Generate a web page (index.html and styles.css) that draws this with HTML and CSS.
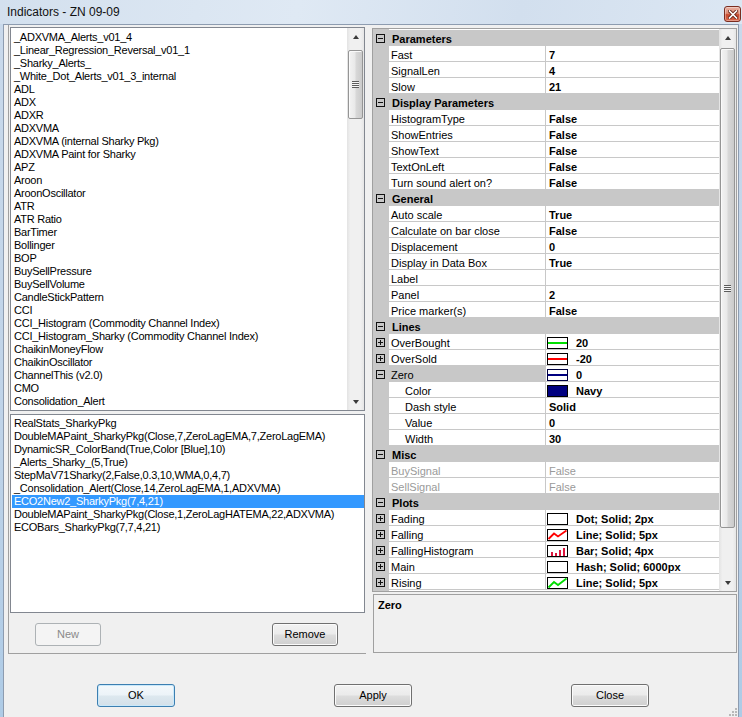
FILE: index.html
```html
<!DOCTYPE html>
<html>
<head>
<meta charset="utf-8">
<title>Indicators - ZN 09-09</title>
<link rel="stylesheet" href="styles.css">
</head>
<body>
<div class="window">
  <div class="titlebar">
    <span class="title">Indicators - ZN 09-09</span>
    <span class="close-btn"><svg width="10" height="9" viewBox="0 0 10 9"><path d="M1.5 1 L8.5 8 M8.5 1 L1.5 8" stroke="#6a2418" stroke-width="3.4" stroke-linecap="square"/><path d="M1.5 1 L8.5 8 M8.5 1 L1.5 8" stroke="#ffffff" stroke-width="1.6" stroke-linecap="square"/></svg></span>
  </div>
  <div class="client">
    <div class="main">
      <div class="left-pane">
        <div class="listbox top-list">
          <div class="items">
            <div class="item">_ADXVMA_Alerts_v01_4</div>
            <div class="item">_Linear_Regression_Reversal_v01_1</div>
            <div class="item">_Sharky_Alerts_</div>
            <div class="item">_White_Dot_Alerts_v01_3_internal</div>
            <div class="item">ADL</div>
            <div class="item">ADX</div>
            <div class="item">ADXR</div>
            <div class="item">ADXVMA</div>
            <div class="item">ADXVMA (internal Sharky Pkg)</div>
            <div class="item">ADXVMA Paint for Sharky</div>
            <div class="item">APZ</div>
            <div class="item">Aroon</div>
            <div class="item">AroonOscillator</div>
            <div class="item">ATR</div>
            <div class="item">ATR Ratio</div>
            <div class="item">BarTimer</div>
            <div class="item">Bollinger</div>
            <div class="item">BOP</div>
            <div class="item">BuySellPressure</div>
            <div class="item">BuySellVolume</div>
            <div class="item">CandleStickPattern</div>
            <div class="item">CCI</div>
            <div class="item">CCI_Histogram (Commodity Channel Index)</div>
            <div class="item">CCI_Histogram_Sharky (Commodity Channel Index)</div>
            <div class="item">ChaikinMoneyFlow</div>
            <div class="item">ChaikinOscillator</div>
            <div class="item">ChannelThis (v2.0)</div>
            <div class="item">CMO</div>
            <div class="item">Consolidation_Alert</div>
          </div>
          <div class="vscroll list-scroll">
            <div class="sb-btn"><span class="arr-up"></span></div>
            <div class="thumb list-thumb"><span class="grip"></span></div>
            <div class="sb-fill"></div>
            <div class="sb-btn"><span class="arr-down"></span></div>
          </div>
        </div>
        <div class="listbox bottom-list">
          <div class="items">
            <div class="item">RealStats_SharkyPkg</div>
            <div class="item">DoubleMAPaint_SharkyPkg(Close,7,ZeroLagEMA,7,ZeroLagEMA)</div>
            <div class="item">DynamicSR_ColorBand(True,Color [Blue],10)</div>
            <div class="item">_Alerts_Sharky_(5,True)</div>
            <div class="item">StepMaV71Sharky(2,False,0.3,10,WMA,0,4,7)</div>
            <div class="item">_Consolidation_Alert(Close,14,ZeroLagEMA,1,ADXVMA)</div>
            <div class="item selected">ECO2New2_SharkyPkg(7,4,21)</div>
            <div class="item">DoubleMAPaint_SharkyPkg(Close,1,ZeroLagHATEMA,22,ADXVMA)</div>
            <div class="item">ECOBars_SharkyPkg(7,7,4,21)</div>
          </div>
        </div>
        <div class="left-buttons">
          <button class="btn btn-new" disabled>New</button>
          <button class="btn btn-remove">Remove</button>
        </div>
      </div>

      <div class="right-pane">
        <div class="propgrid">
          <div class="pg-rows">
            <div class="pg-cat"><span class="pg-margin"><svg class="exp" width="9" height="9"><rect x=".5" y=".5" width="8" height="8" fill="none" stroke="#111"/><path d="M2 4.5h5" stroke="#111"/></svg></span><span class="cat-label">Parameters</span></div>
            <div class="pg-row"><span class="pg-margin"></span><span class="pg-name">Fast</span><span class="pg-val">7</span></div>
            <div class="pg-row"><span class="pg-margin"></span><span class="pg-name">SignalLen</span><span class="pg-val">4</span></div>
            <div class="pg-row"><span class="pg-margin"></span><span class="pg-name">Slow</span><span class="pg-val">21</span></div>

            <div class="pg-cat"><span class="pg-margin"><svg class="exp" width="9" height="9"><rect x=".5" y=".5" width="8" height="8" fill="none" stroke="#111"/><path d="M2 4.5h5" stroke="#111"/></svg></span><span class="cat-label">Display Parameters</span></div>
            <div class="pg-row"><span class="pg-margin"></span><span class="pg-name">HistogramType</span><span class="pg-val">False</span></div>
            <div class="pg-row"><span class="pg-margin"></span><span class="pg-name">ShowEntries</span><span class="pg-val">False</span></div>
            <div class="pg-row"><span class="pg-margin"></span><span class="pg-name">ShowText</span><span class="pg-val">False</span></div>
            <div class="pg-row"><span class="pg-margin"></span><span class="pg-name">TextOnLeft</span><span class="pg-val">False</span></div>
            <div class="pg-row"><span class="pg-margin"></span><span class="pg-name">Turn sound alert on?</span><span class="pg-val">False</span></div>

            <div class="pg-cat"><span class="pg-margin"><svg class="exp" width="9" height="9"><rect x=".5" y=".5" width="8" height="8" fill="none" stroke="#111"/><path d="M2 4.5h5" stroke="#111"/></svg></span><span class="cat-label">General</span></div>
            <div class="pg-row"><span class="pg-margin"></span><span class="pg-name">Auto scale</span><span class="pg-val">True</span></div>
            <div class="pg-row"><span class="pg-margin"></span><span class="pg-name">Calculate on bar close</span><span class="pg-val">False</span></div>
            <div class="pg-row"><span class="pg-margin"></span><span class="pg-name">Displacement</span><span class="pg-val">0</span></div>
            <div class="pg-row"><span class="pg-margin"></span><span class="pg-name">Display in Data Box</span><span class="pg-val">True</span></div>
            <div class="pg-row"><span class="pg-margin"></span><span class="pg-name">Label</span><span class="pg-val"></span></div>
            <div class="pg-row"><span class="pg-margin"></span><span class="pg-name">Panel</span><span class="pg-val">2</span></div>
            <div class="pg-row"><span class="pg-margin"></span><span class="pg-name">Price marker(s)</span><span class="pg-val">False</span></div>

            <div class="pg-cat"><span class="pg-margin"><svg class="exp" width="9" height="9"><rect x=".5" y=".5" width="8" height="8" fill="none" stroke="#111"/><path d="M2 4.5h5" stroke="#111"/></svg></span><span class="cat-label">Lines</span></div>
            <div class="pg-row"><span class="pg-margin"><svg class="exp" width="9" height="9"><rect x=".5" y=".5" width="8" height="8" fill="none" stroke="#111"/><path d="M2 4.5h5M4.5 2v5" stroke="#111"/></svg></span><span class="pg-name">OverBought</span><span class="pg-val sw"><svg width="21" height="12"><rect x=".5" y=".5" width="20" height="11" fill="#fff" stroke="#000"/><rect x="1" y="5" width="19" height="2" fill="#00e000"/></svg><span class="sw-text">20</span></span></div>
            <div class="pg-row"><span class="pg-margin"><svg class="exp" width="9" height="9"><rect x=".5" y=".5" width="8" height="8" fill="none" stroke="#111"/><path d="M2 4.5h5M4.5 2v5" stroke="#111"/></svg></span><span class="pg-name">OverSold</span><span class="pg-val sw"><svg width="21" height="12"><rect x=".5" y=".5" width="20" height="11" fill="#fff" stroke="#000"/><rect x="1" y="5" width="19" height="2" fill="#ff0000"/></svg><span class="sw-text">-20</span></span></div>
            <div class="pg-row"><span class="pg-margin"><svg class="exp" width="9" height="9"><rect x=".5" y=".5" width="8" height="8" fill="none" stroke="#111"/><path d="M2 4.5h5" stroke="#111"/></svg></span><span class="pg-name selected-name">Zero</span><span class="pg-val sw"><svg width="21" height="12"><rect x=".5" y=".5" width="20" height="11" fill="#fff" stroke="#000040"/><rect x="1" y="5" width="19" height="2" fill="#000080"/></svg><span class="sw-text">0</span></span></div>
            <div class="pg-row"><span class="pg-margin"></span><span class="pg-name child">Color</span><span class="pg-val sw"><svg width="21" height="12"><rect x=".5" y=".5" width="20" height="11" fill="#000080" stroke="#000"/></svg><span class="sw-text">Navy</span></span></div>
            <div class="pg-row"><span class="pg-margin"></span><span class="pg-name child">Dash style</span><span class="pg-val">Solid</span></div>
            <div class="pg-row"><span class="pg-margin"></span><span class="pg-name child">Value</span><span class="pg-val">0</span></div>
            <div class="pg-row"><span class="pg-margin"></span><span class="pg-name child">Width</span><span class="pg-val">30</span></div>

            <div class="pg-cat"><span class="pg-margin"><svg class="exp" width="9" height="9"><rect x=".5" y=".5" width="8" height="8" fill="none" stroke="#111"/><path d="M2 4.5h5" stroke="#111"/></svg></span><span class="cat-label">Misc</span></div>
            <div class="pg-row disabled"><span class="pg-margin"></span><span class="pg-name">BuySignal</span><span class="pg-val">False</span></div>
            <div class="pg-row disabled"><span class="pg-margin"></span><span class="pg-name">SellSignal</span><span class="pg-val">False</span></div>

            <div class="pg-cat"><span class="pg-margin"><svg class="exp" width="9" height="9"><rect x=".5" y=".5" width="8" height="8" fill="none" stroke="#111"/><path d="M2 4.5h5" stroke="#111"/></svg></span><span class="cat-label">Plots</span></div>
            <div class="pg-row"><span class="pg-margin"><svg class="exp" width="9" height="9"><rect x=".5" y=".5" width="8" height="8" fill="none" stroke="#111"/><path d="M2 4.5h5M4.5 2v5" stroke="#111"/></svg></span><span class="pg-name">Fading</span><span class="pg-val sw"><svg width="21" height="12"><rect x=".5" y=".5" width="20" height="11" fill="#fff" stroke="#000"/></svg><span class="sw-text">Dot; Solid; 2px</span></span></div>
            <div class="pg-row"><span class="pg-margin"><svg class="exp" width="9" height="9"><rect x=".5" y=".5" width="8" height="8" fill="none" stroke="#111"/><path d="M2 4.5h5M4.5 2v5" stroke="#111"/></svg></span><span class="pg-name">Falling</span><span class="pg-val sw"><svg width="21" height="12"><rect x=".5" y=".5" width="20" height="11" fill="#fff" stroke="#000"/><polyline points="1.5,10 7,4.5 11,7.5 19.5,1.5" fill="none" stroke="#ff0000" stroke-width="1.8"/></svg><span class="sw-text">Line; Solid; 5px</span></span></div>
            <div class="pg-row"><span class="pg-margin"><svg class="exp" width="9" height="9"><rect x=".5" y=".5" width="8" height="8" fill="none" stroke="#111"/><path d="M2 4.5h5M4.5 2v5" stroke="#111"/></svg></span><span class="pg-name">FallingHistogram</span><span class="pg-val sw"><svg width="21" height="12"><rect x=".5" y=".5" width="20" height="11" fill="#fff" stroke="#000"/><rect x="4" y="7" width="2" height="4" fill="#dc143c"/><rect x="8" y="8" width="2" height="3" fill="#dc143c"/><rect x="12" y="5" width="2" height="6" fill="#dc143c"/><rect x="16" y="3" width="2" height="8" fill="#dc143c"/></svg><span class="sw-text">Bar; Solid; 4px</span></span></div>
            <div class="pg-row"><span class="pg-margin"><svg class="exp" width="9" height="9"><rect x=".5" y=".5" width="8" height="8" fill="none" stroke="#111"/><path d="M2 4.5h5M4.5 2v5" stroke="#111"/></svg></span><span class="pg-name">Main</span><span class="pg-val sw"><svg width="21" height="12"><rect x=".5" y=".5" width="20" height="11" fill="#fff" stroke="#000"/></svg><span class="sw-text">Hash; Solid; 6000px</span></span></div>
            <div class="pg-row"><span class="pg-margin"><svg class="exp" width="9" height="9"><rect x=".5" y=".5" width="8" height="8" fill="none" stroke="#111"/><path d="M2 4.5h5M4.5 2v5" stroke="#111"/></svg></span><span class="pg-name">Rising</span><span class="pg-val sw"><svg width="21" height="12"><rect x=".5" y=".5" width="20" height="11" fill="#fff" stroke="#000"/><polyline points="1.5,10.5 7,5 11,8 19.5,1.5" fill="none" stroke="#00dd00" stroke-width="1.8"/></svg><span class="sw-text">Line; Solid; 5px</span></span></div>
          </div>
          <div class="vscroll grid-scroll">
            <div class="sb-btn"><span class="arr-up"></span></div>
            <div class="thumb grid-thumb"><span class="grip"></span></div>
            <div class="sb-fill"></div>
            <div class="sb-btn"><span class="arr-down"></span></div>
          </div>
        </div>
        <div class="desc">Zero</div>
      </div>
    </div>

    <div class="dlg-buttons">
      <button class="btn btn-dlg btn-default">OK</button>
      <button class="btn btn-dlg">Apply</button>
      <button class="btn btn-dlg">Close</button>
    </div>
    <svg class="grip-corner" width="10" height="10" viewBox="0 0 10 10"><g fill="#b8b8b8"><rect x="7" y="1" width="2" height="2"/><rect x="4" y="4" width="2" height="2"/><rect x="7" y="4" width="2" height="2"/><rect x="1" y="7" width="2" height="2"/><rect x="4" y="7" width="2" height="2"/><rect x="7" y="7" width="2" height="2"/></g></svg>
  </div>
</div>
</body>
</html>
```

FILE: styles.css
```css
* { box-sizing: border-box; }
html, body { margin: 0; padding: 0; }
body {
  width: 742px;
  height: 717px;
  overflow: hidden;
  font-family: "Liberation Sans", Arial, sans-serif;
  font-size: 11px;
  color: #000;
}

.window {
  width: 742px;
  height: 717px;
  display: flex;
  flex-direction: column;
  padding: 0 3px;
  background: linear-gradient(to bottom, #dbe6f3 0px, #c9d9eb 24px, #bfd3e8 60%, #aecbe6 100%);
}

.titlebar {
  height: 24px;
  flex: none;
  display: flex;
  align-items: flex-start;
  justify-content: space-between;
  background: linear-gradient(100deg, #d3e0ee 0%, #dfe9f4 40%, #d2dfee 70%, #dce7f3 100%);
  margin: 0 -3px;
  padding-right: 1px;
  padding-left: 7px;
}
.title {
  font-size: 12px;
  line-height: 24px;
  color: #111;
}
.close-btn {
  margin-top: 6px;
  width: 17px;
  height: 16px;
  border: 1px solid #7a2d20;
  border-radius: 3px;
  background: linear-gradient(to bottom, #eab2a4 0%, #dd8b74 45%, #c8482d 55%, #d9664a 100%);
  display: flex;
  align-items: center;
  justify-content: center;
  box-shadow: inset 0 0 0 1px rgba(255,255,255,0.35);
}

.client {
  flex: 1;
  position: relative;
  background: #f0f0f0;
  border: 1px solid #8d9cb0;
  border-bottom: none;
  display: flex;
  flex-direction: column;
}

.main {
  display: flex;
  flex: none;
}

/* left side */
.left-pane {
  margin-left: 4px;
  width: 358px;
  height: 629px;
  border-left: 1px solid #a0a0a0;
  border-bottom: 1px solid #a0a0a0;
  padding: 2px 0 0 1px;
  display: flex;
  flex-direction: column;
}

.listbox {
  width: 355px;
  border: 1px solid #828790;
  background: #fff;
  display: flex;
  flex: none;
}
.top-list { height: 384px; }
.bottom-list { height: 199px; margin-top: 3px; }

.items {
  flex: 1;
  padding: 3px 0 0 1px;
  overflow: hidden;
}
.bottom-list .items { padding-top: 2px; }
.item {
  height: 13px;
  line-height: 13px;
  padding-left: 2px;
  white-space: nowrap;
  letter-spacing: -0.25px;
}
.item.selected {
  background: #3399ff;
  color: #fff;
}

.left-buttons {
  display: flex;
  margin-top: 10px;
  padding-left: 25px;
}
.btn-new { margin-right: 171px; }

/* scrollbars */
.vscroll {
  width: 17px;
  flex: none;
  display: flex;
  flex-direction: column;
  align-items: center;
  background: linear-gradient(to right, #e3e3e3 0%, #f0f0f0 20%, #f0f0f0 80%, #e6e6e6 100%);
}
.sb-btn {
  height: 17px;
  width: 17px;
  flex: none;
  display: flex;
  align-items: center;
  justify-content: center;
}
.arr-up {
  width: 0; height: 0;
  border-left: 3.5px solid transparent;
  border-right: 3.5px solid transparent;
  border-bottom: 4px solid #3a3a3a;
}
.arr-down {
  width: 0; height: 0;
  border-left: 3.5px solid transparent;
  border-right: 3.5px solid transparent;
  border-top: 4px solid #3a3a3a;
}
.sb-fill { flex: 1; }
.thumb {
  width: 15px;
  flex: none;
  border: 1px solid #959595;
  border-radius: 2px;
  background: linear-gradient(to right, #f3f3f3 0%, #e9e9e9 45%, #d8d8d8 55%, #cbcbcb 100%);
  box-shadow: inset 1px 1px 0 #fafafa;
  display: flex;
  align-items: center;
  justify-content: center;
}
.list-thumb { margin-top: 5px; height: 69px; }
.grid-thumb { margin-top: 2px; height: 480px; }
.grip {
  width: 7px;
  height: 7px;
  background: repeating-linear-gradient(to bottom, #5c5c5c 0 1px, #f6f6f6 1px 2px);
}

/* right side */
.right-pane {
  flex: 1;
  margin-left: 6px;
  margin-right: 1px;
  display: flex;
  flex-direction: column;
}

.propgrid {
  margin-top: 3px;
  height: 564px;
  border: 1px solid #a0a0a0;
  background: #fff;
  display: flex;
}
.pg-rows {
  flex: 1;
  padding-top: 1px;
  background: linear-gradient(to right, #c8c8c8 16px, #fff 16px);
  overflow: hidden;
}

.pg-cat {
  height: 16px;
  display: flex;
  background: #c8c8c8;
  font-weight: bold;
}
.cat-label {
  padding: 3px 0 0 3px;
  line-height: 12px;
}
.pg-margin {
  width: 16px;
  flex: none;
  display: flex;
  align-items: center;
  padding-left: 3px;
  height: 16px;
}
.exp { display: block; }

.pg-row {
  height: 16px;
  display: grid;
  grid-template-columns: 16px 157px 1fr;
}
.pg-name {
  border-right: 1px solid #c8c8c8;
  border-bottom: 1px solid #c8c8c8;
  padding: 3px 0 0 2px;
  line-height: 12px;
  white-space: nowrap;
  overflow: hidden;
}
.pg-name.child { padding-left: 16px; }
.pg-name.selected-name { background: #c8c8c8; }
.pg-val {
  border-bottom: 1px solid #c8c8c8;
  padding: 3px 0 0 3px;
  line-height: 12px;
  font-weight: bold;
  white-space: nowrap;
  overflow: hidden;
}
.pg-val.sw {
  display: flex;
  align-items: flex-start;
  padding-left: 1px;
}
.pg-val.sw svg { display: block; flex: none; }
.sw-text { margin-left: 8px; }
.pg-row.disabled .pg-name,
.pg-row.disabled .pg-val {
  color: #9a9a9a;
  font-weight: normal;
}

.desc {
  margin: 2px 0 0 1px;
  height: 59px;
  border: 1px solid #a0a0a0;
  background: #f0f0f0;
  padding: 4px 4px;
  font-weight: bold;
  line-height: 13px;
}

/* buttons */
.btn {
  font-family: "Liberation Sans", Arial, sans-serif;
  font-size: 11px;
  color: #000;
  height: 23px;
  width: 66px;
  padding: 0;
  border: 1px solid #707070;
  border-radius: 3px;
  background: linear-gradient(to bottom, #f2f2f2 0%, #ebebeb 48%, #dddddd 52%, #cfcfcf 100%);
  box-shadow: inset 0 0 0 1px #fbfbfb;
  line-height: 21px;
  text-align: center;
}
.btn:disabled {
  color: #8a8a8a;
  border-color: #adb2b5;
  background: #f4f4f4;
  box-shadow: none;
}
.dlg-buttons {
  display: flex;
  margin-top: 30px;
  padding-left: 93px;
  gap: 159px;
}
.btn-dlg { width: 78px; height: 23px; }
.btn-default {
  border-color: #3c7fb1;
  box-shadow: inset 0 0 0 1px #c9e8fa;
  background: linear-gradient(to bottom, #f4f9fc 0%, #ecf3f8 48%, #dde8ef 52%, #d3e0e9 100%);
}

.grip-corner {
  position: absolute;
  right: 0;
  bottom: 0;
}
```
